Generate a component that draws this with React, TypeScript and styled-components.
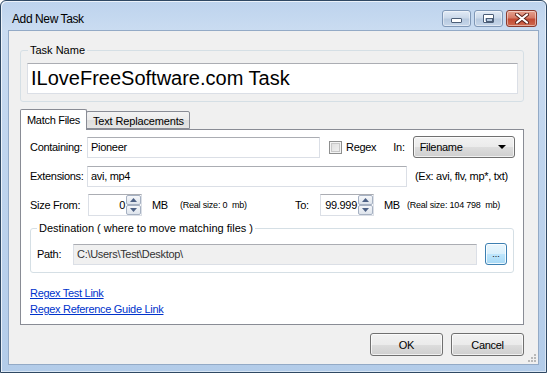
import React from 'react';
import styled, { createGlobalStyle } from 'styled-components';

const GlobalStyle = createGlobalStyle`
  html, body {
    margin: 0;
    padding: 0;
    background: #ffffff;
  }
  body {
    font-family: "Liberation Sans", Arial, sans-serif;
    font-size: 11px;
    color: #000;
  }
  * {
    box-sizing: border-box;
  }
`;

const AddNewTask = () => {
  return (
    <Window>
      <TitleBar>
        <Title>Add New Task</Title>
        <CaptionButtons>
          <CaptionButton>
            <MinGlyph />
          </CaptionButton>
          <CaptionButton>
            <MaxGlyph />
          </CaptionButton>
          <CaptionButton $close>
            <svg width="14" height="11" viewBox="0 0 14 11">
              <path
                d="M2 1.5 L12 9.5 M12 1.5 L2 9.5"
                stroke="#5a2018"
                strokeWidth="4"
                strokeLinecap="round"
              />
              <path
                d="M2 1.5 L12 9.5 M12 1.5 L2 9.5"
                stroke="#ffffff"
                strokeWidth="2.2"
                strokeLinecap="round"
              />
            </svg>
          </CaptionButton>
        </CaptionButtons>
      </TitleBar>

      <Client>
        <GroupBox $pad="6px 5px 7px 6px">
          <Legend $left={1}>Task Name</Legend>
          <BigInput defaultValue="ILoveFreeSoftware.com Task" />
        </GroupBox>

        <TabStrip>
          <Tab $active>Match Files</Tab>
          <Tab>Text Replacements</Tab>
        </TabStrip>
        <TabPanel>
          <Row>
            <FieldLabel $width={57}>Containing:</FieldLabel>
            <TextBox $width={233} defaultValue="Pioneer" />
            <CheckBox $ml={9} />
            <Text $ml={4}>Regex</Text>
            <Text $ml={17}>In:</Text>
            <Select $ml={8}>
              <span>Filename</span>
              <Arrow />
            </Select>
          </Row>
          <Row>
            <FieldLabel $width={57}>Extensions:</FieldLabel>
            <TextBox $width={320} defaultValue="avi, mp4" />
            <Text $ml={8}>(Ex: avi, flv, mp*, txt)</Text>
          </Row>
          <Row>
            <SizeGroup>
              <FieldLabel $width={58}>Size From:</FieldLabel>
              <Spinner value="0" />
              <Text $ml={10}>MB</Text>
              <SmallText $ml={12}>(Real size: 0&nbsp; mb)</SmallText>
            </SizeGroup>
            <FieldLabel $width={25}>To:</FieldLabel>
            <Spinner value="99.999" />
            <Text $ml={10}>MB</Text>
            <SmallText $ml={7}>(Real size: 104 798&nbsp; mb)</SmallText>
          </Row>

          <DestinationBox $pad="8px 6px 7px 6px">
            <Legend $left={0}>Destination ( where to move matching files )</Legend>
            <Row>
              <FieldLabel $width={36}>Path:</FieldLabel>
              <TextBox $width={404} $readOnly readOnly defaultValue="C:\Users\Test\Desktop\" />
              <BrowseButton>...</BrowseButton>
            </Row>
          </DestinationBox>

          <Links>
            <Link href="#">Regex Test Link</Link>
            <Link href="#">Regex Reference Guide Link</Link>
          </Links>
        </TabPanel>

        <ButtonBar>
          <DialogButton>OK</DialogButton>
          <DialogButton>Cancel</DialogButton>
        </ButtonBar>
        <Grip>
          <svg width="10" height="10" viewBox="0 0 10 10">
            <g fill="#b8b8b8">
              <rect x="7" y="1" width="2" height="2" />
              <rect x="4" y="4" width="2" height="2" />
              <rect x="7" y="4" width="2" height="2" />
              <rect x="1" y="7" width="2" height="2" />
              <rect x="4" y="7" width="2" height="2" />
              <rect x="7" y="7" width="2" height="2" />
            </g>
          </svg>
        </Grip>
      </Client>
    </Window>
  );
};

const Spinner = ({ value }: { value: string }) => (
  <SpinBox>
    <SpinValue>{value}</SpinValue>
    <SpinButtons>
      <SpinHalf>
        <svg width="7" height="4" viewBox="0 0 7 4">
          <path d="M0 4 L3.5 0 L7 4 Z" fill="#4d6185" />
        </svg>
      </SpinHalf>
      <SpinHalf>
        <svg width="7" height="4" viewBox="0 0 7 4">
          <path d="M0 0 L3.5 4 L7 0 Z" fill="#4d6185" />
        </svg>
      </SpinHalf>
    </SpinButtons>
  </SpinBox>
);

const App = () => (
  <>
    <GlobalStyle />
    <AddNewTask />
  </>
);

const Window = styled.div`
  position: relative;
  width: 547px;
  height: 373px;
  border: 1px solid #2f4863;
  border-radius: 6px 6px 0 0;
  background: linear-gradient(to bottom, #bdd3ed 0%, #cadcf1 8%, #c0d5ee 40%, #b3cce9 100%);
  box-shadow: inset 1px 1px 0 rgba(255, 255, 255, 0.7), inset -1px -1px 0 rgba(255, 255, 255, 0.5);
  display: flex;
  flex-direction: column;
  overflow: hidden;
`;

const TitleBar = styled.div`
  display: flex;
  align-items: flex-start;
  height: 29px;
  padding: 0 9px 0 11px;
  flex-shrink: 0;
`;

const Title = styled.div`
  margin-top: 11px;
  font-size: 12px;
  line-height: 14px;
  letter-spacing: -0.4px;
  color: #000;
`;

const CaptionButtons = styled.div`
  margin-left: auto;
  margin-top: 9px;
  display: flex;
  gap: 3px;
`;

const CaptionButton = styled.div<{ $close?: boolean }>`
  width: ${(p) => (p.$close ? 31 : 29)}px;
  height: 17px;
  border: 1px solid ${(p) => (p.$close ? '#8a3a2e' : '#7f97b6')};
  border-radius: 3px;
  display: flex;
  align-items: center;
  justify-content: center;
  background: ${(p) =>
    p.$close
      ? 'linear-gradient(to bottom, #e6a290 0%, #d57a66 45%, #c24a33 55%, #cf6a4f 100%)'
      : 'linear-gradient(to bottom, #e2ebf6 0%, #cbd9ea 45%, #b7c9df 55%, #c7d7ea 100%)'};
  box-shadow: inset 0 0 0 1px rgba(255, 255, 255, 0.45);
`;

const MinGlyph = styled.div`
  width: 11px;
  height: 5px;
  margin-top: 4px;
  background: #ffffff;
  border: 1px solid #4c5e77;
  border-radius: 1px;
`;

const MaxGlyph = styled.div`
  width: 11px;
  height: 9px;
  background: transparent;
  border: 1px solid #4c5e77;
  box-shadow: inset 0 0 0 1px #ffffff, inset 0 3px 0 #ffffff;
  border-radius: 1px;
  position: relative;

  &::after {
    content: '';
    position: absolute;
    left: 2px;
    top: 3px;
    width: 5px;
    height: 2px;
    border: 1px solid #4c5e77;
    background: transparent;
  }
`;

const Client = styled.div`
  position: relative;
  flex: 1;
  margin: 0 7px 7px 7px;
  border: 1px solid #93aac6;
  background: #f0f0f0;
  padding: 12px 14px 0 11px;
  display: flex;
  flex-direction: column;
`;

const GroupBox = styled.fieldset<{ $pad: string }>`
  margin: 0;
  padding: ${(p) => p.$pad};
  border: 1px solid #d5dfe5;
  border-radius: 3px;
  min-width: 0;
`;

const Legend = styled.legend<{ $left: number }>`
  margin-left: ${(p) => p.$left}px;
  padding: 0 2px;
  line-height: 14px;
  color: #000;
`;

const BigInput = styled.input`
  display: block;
  width: 100%;
  height: 31px;
  margin: 0;
  padding: 0 0 0 3px;
  border: 1px solid #dbdfe6;
  border-top-color: #abadb3;
  background: #ffffff;
  font-family: "Liberation Sans", Arial, sans-serif;
  font-size: 20px;
  color: #000;
  outline: none;
`;

const TabStrip = styled.div`
  display: flex;
  align-items: flex-end;
  margin-top: 7px;
  height: 20px;
  position: relative;
  z-index: 1;
`;

const Tab = styled.div<{ $active?: boolean }>`
  height: ${(p) => (p.$active ? 21 : 18)}px;
  margin-bottom: ${(p) => (p.$active ? -1 : 0)}px;
  margin-left: ${(p) => (p.$active ? 0 : -1)}px;
  padding: ${(p) => (p.$active ? '3px 6px 0 6px' : '2px 5px 0 6px')};
  border: 1px solid #898c95;
  border-bottom: ${(p) => (p.$active ? 'none' : '1px solid #898c95')};
  border-radius: 2px 2px 0 0;
  background: ${(p) => (p.$active ? '#ffffff' : 'linear-gradient(to bottom, #f3f3f3 0%, #ebebeb 50%, #dedede 51%, #e5e5e5 100%)')};
  position: relative;
  z-index: ${(p) => (p.$active ? 2 : 1)};
  white-space: nowrap;
  line-height: 14px;
  letter-spacing: ${(p) => (p.$active ? -0.3 : -0.15)}px;
`;

const TabPanel = styled.div`
  height: 196px;
  border: 1px solid #898c95;
  background: #ffffff;
  padding: 6px 9px 0 9px;
  display: flex;
  flex-direction: column;
  gap: 7px;
`;

const Row = styled.div`
  display: flex;
  align-items: center;
  height: 22px;
  flex-shrink: 0;
`;

const SizeGroup = styled.div`
  display: flex;
  align-items: center;
  width: 265px;
`;

const FieldLabel = styled.span<{ $width: number }>`
  width: ${(p) => p.$width}px;
  flex-shrink: 0;
  white-space: nowrap;
  letter-spacing: -0.3px;
`;

const Text = styled.span<{ $ml: number }>`
  margin-left: ${(p) => p.$ml}px;
  white-space: nowrap;
  letter-spacing: -0.3px;
`;

const SmallText = styled.span<{ $ml: number }>`
  margin-left: ${(p) => p.$ml}px;
  font-size: 9px;
  white-space: nowrap;
  letter-spacing: -0.2px;
`;

const TextBox = styled.input<{ $width: number; $readOnly?: boolean }>`
  width: ${(p) => p.$width}px;
  height: 21px;
  margin: 0;
  padding: 0 0 0 3px;
  border: 1px solid #dbdfe6;
  border-top-color: #abadb3;
  background: ${(p) => (p.$readOnly ? '#f0f0f0' : '#ffffff')};
  font-family: "Liberation Sans", Arial, sans-serif;
  font-size: 11px;
  letter-spacing: -0.3px;
  color: ${(p) => (p.$readOnly ? '#333333' : '#000000')};
  outline: none;
  flex-shrink: 0;
`;

const CheckBox = styled.span<{ $ml: number }>`
  margin-left: ${(p) => p.$ml}px;
  width: 13px;
  height: 13px;
  border: 1px solid #8e8f8f;
  background: linear-gradient(135deg, #dcdcdc 0%, #f4f4f4 100%);
  box-shadow: inset 0 0 0 1px #f4f4f4, inset 0 0 0 2px #c8c8c8;
  flex-shrink: 0;
`;

const Select = styled.div<{ $ml: number }>`
  margin-left: ${(p) => p.$ml}px;
  width: 102px;
  height: 22px;
  border: 1px solid #707070;
  border-radius: 3px;
  background: linear-gradient(to bottom, #f2f2f2 0%, #ebebeb 50%, #dddddd 51%, #cfcfcf 100%);
  box-shadow: inset 0 0 0 1px rgba(255, 255, 255, 0.7);
  display: flex;
  align-items: center;
  justify-content: space-between;
  padding: 0 8px 0 6px;
  letter-spacing: -0.3px;
  flex-shrink: 0;
`;

const Arrow = styled.span`
  width: 0;
  height: 0;
  border-left: 4px solid transparent;
  border-right: 4px solid transparent;
  border-top: 4px solid #000;
`;

const SpinBox = styled.div`
  width: 54px;
  height: 22px;
  border: 1px solid #dbdfe6;
  border-top-color: #abadb3;
  background: #ffffff;
  display: flex;
  align-items: stretch;
  flex-shrink: 0;
`;

const SpinValue = styled.span`
  flex: 1;
  text-align: right;
  padding-right: 1px;
  line-height: 20px;
  letter-spacing: -0.3px;
`;

const SpinButtons = styled.div`
  width: 15px;
  display: flex;
  flex-direction: column;
`;

const SpinHalf = styled.div`
  flex: 1;
  border: 1px solid #a6b1c2;
  border-radius: 2px;
  background: linear-gradient(to bottom, #f5f7fa 0%, #dee4ec 100%);
  display: flex;
  align-items: center;
  justify-content: center;
`;

const DestinationBox = styled(GroupBox)`
  margin-top: -2px;
`;

const BrowseButton = styled.div`
  margin-left: 8px;
  width: 22px;
  height: 22px;
  border: 1px solid #3c7fb1;
  border-radius: 3px;
  background: linear-gradient(to bottom, #eaf6fd 0%, #d9f0fc 50%, #bee6fd 51%, #a7d9f5 100%);
  box-shadow: inset 0 0 0 1px rgba(255, 255, 255, 0.8);
  display: flex;
  align-items: flex-end;
  justify-content: center;
  padding-bottom: 5px;
  font-size: 9px;
  line-height: 9px;
  color: #000;
  flex-shrink: 0;
`;

const Links = styled.div`
  margin-top: 5px;
  display: flex;
  flex-direction: column;
  align-items: flex-start;
`;

const Link = styled.a`
  color: #0033cc;
  text-decoration: underline;
  line-height: 16px;
  letter-spacing: -0.3px;
`;

const ButtonBar = styled.div`
  display: flex;
  justify-content: flex-end;
  gap: 8px;
  margin-top: 8px;
`;

const DialogButton = styled.div`
  width: 73px;
  height: 23px;
  border: 1px solid #707070;
  border-radius: 3px;
  background: linear-gradient(to bottom, #f2f2f2 0%, #ebebeb 50%, #dddddd 51%, #cfcfcf 100%);
  box-shadow: inset 0 0 0 1px rgba(255, 255, 255, 0.7);
  display: flex;
  align-items: center;
  justify-content: center;
  letter-spacing: -0.3px;
`;

const Grip = styled.div`
  position: absolute;
  right: 1px;
  bottom: 1px;
  width: 10px;
  height: 10px;
  display: flex;
`;

export default App;
